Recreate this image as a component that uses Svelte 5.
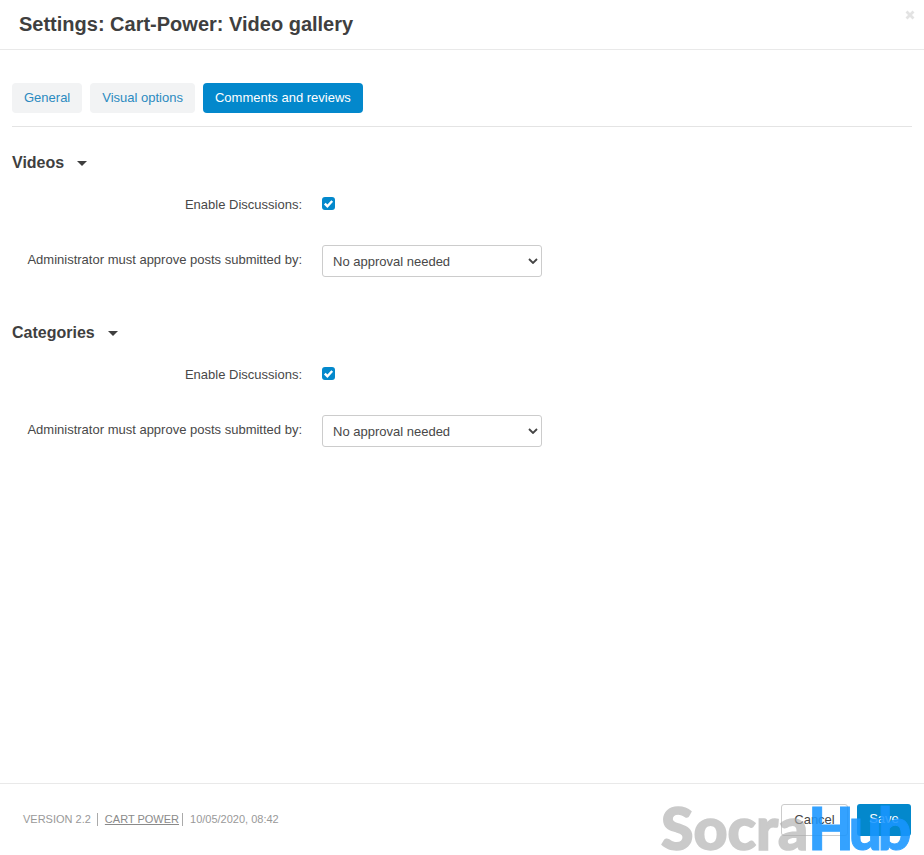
<script>
  const sections = ['Videos', 'Categories'];
</script>

<div class="dialog">
  <header class="head">
    <h1>Settings: Cart-Power: Video gallery</h1>
    <svg class="close" viewBox="0 0 10 10" width="10" height="10" aria-hidden="true"><path d="M1.5 1.5l7 7M8.500 1.500l-7 7" stroke="#e3e3e3" stroke-width="2.800" fill="none"/></svg>
  </header>

  <main class="body">
    <nav class="tabs">
      <span class="tab">General</span>
      <span class="tab">Visual options</span>
      <span class="tab active">Comments and reviews</span>
    </nav>

    {#each sections as s}
      <section class="section">
        <h2>{s}<span class="caret"></span></h2>
        <div class="row check">
          <span class="label">Enable Discussions:</span>
          <span class="box">
            <svg viewBox="0 0 13 13" width="13" height="13" aria-hidden="true"><rect width="13" height="13" rx="3" fill="#0388cc"/><path d="M2.800 6.600l2.600 2.600L10.200 4" stroke="#fff" stroke-width="2.400" fill="none"/></svg>
          </span>
        </div>
        <div class="row sel">
          <span class="label">Administrator must approve posts submitted by:</span>
          <span class="select">No approval needed
            <svg viewBox="0 0 10 6" width="10" height="6" aria-hidden="true"><path d="M1 1l4 4 4-4" stroke="#444" stroke-width="1.800" fill="none"/></svg>
          </span>
        </div>
      </section>
    {/each}
  </main>

  <footer class="foot">
    <div class="meta">
      <span class="v">VERSION 2.2</span>
      <span class="link">CART POWER</span>
      <span class="d">10/05/2020, 08:42</span>
    </div>
    <div class="btns">
      <span class="btn cancel">Cancel</span>
      <span class="btn save">Save</span>
    </div>
  </footer>

  <div class="mark"><span class="socra">Socra</span><span class="hub">Hub</span></div>
</div>

<style>
  :global(body) { margin: 0; background: #fff; }
  .dialog {
    position: relative;
    width: 924px;
    height: 855px;
    display: flex;
    flex-direction: column;
    overflow: hidden;
    font-family: "Liberation Sans", Arial, sans-serif;
    font-size: 13px;
    color: #484848;
  }
  .head {
    position: relative;
    height: 49px;
    flex: none;
    border-bottom: 1px solid #e9e9e9;
    padding-left: 19px;
    display: flex;
    align-items: center;
  }
  h1 { margin: 0; font-size: 20px; font-weight: 700; color: #3f3f3f; line-height: 49px; }
  .close { position: absolute; right: 9px; top: 10px; }
  .body { flex: 1; padding: 33px 12px 0; }
  .tabs {
    display: flex;
    gap: 8px;
    height: 30px;
    padding-bottom: 13px;
    border-bottom: 1px solid #e4e4e4;
  }
  .tab {
    height: 30px;
    line-height: 30px;
    padding: 0 12px;
    background: #f2f3f4;
    border-radius: 4px;
    color: #2b8ac0;
  }
  .tab.active { background: #0388cc; color: #fff; }
  .section { height: 170px; }
  h2 {
    margin: 0;
    padding-top: 27px;
    font-size: 16px;
    line-height: 18px;
    font-weight: 700;
    color: #3f3f3f;
    display: flex;
    align-items: center;
  }
  .caret {
    margin-left: 13px;
    border-left: 5px solid transparent;
    border-right: 5px solid transparent;
    border-top: 5px solid #3f3f3f;
  }
  .row { display: flex; }
  .label { width: 290px; text-align: right; line-height: 18px; flex: none; }
  .check { margin-top: 23px; height: 18px; align-items: center; }
  .check .label { margin-top: 2px; }
  .box { margin-left: 20px; display: flex; }
  .box svg { display: block; margin-top: -2px; }
  .sel { margin-top: 32px; align-items: flex-start; }
  .sel .label { margin-top: 6px; }
  .select {
    box-sizing: border-box;
    margin-left: 20px;
    width: 220px;
    height: 32px;
    border: 1px solid #ccc;
    border-radius: 3px;
    padding: 0 10px;
    line-height: 31px;
    display: flex;
    justify-content: space-between;
    align-items: center;
  }
  .select svg { margin-right: -7px; }
  .foot {
    flex: none;
    height: 71px;
    border-top: 1px solid #e9e9e9;
    padding: 0 13px 0 23px;
    display: flex;
    justify-content: space-between;
    align-items: center;
    box-sizing: content-box;
  }
  .meta { font-size: 11px; color: #999; display: flex; align-items: center; line-height: 13px; }
  .v { padding-right: 6px; border-right: 1px solid #aaa; }
  .link { text-decoration: underline; margin-left: 7px; padding-right: 3px; border-right: 1px solid #aaa; color: #8a8a8a; }
  .d { margin-left: 7px; }
  .btns { display: flex; gap: 9px; }
  .btn {
    box-sizing: border-box;
    height: 32px;
    line-height: 30px;
    border-radius: 3px;
    text-align: center;
  }
  .cancel { width: 67px; border: 1px solid #ccc; color: #444; }
  .save { width: 54px; background: #0388cc; color: #fff; }
  .mark {
    position: absolute;
    left: 661px;
    top: 793px;
    font-family: "Lato", sans-serif;
    font-size: 59px;
    line-height: 70px;
    font-weight: 900;
    white-space: nowrap;
    pointer-events: none;
  }
  .socra { color: #aaa; -webkit-text-stroke: 1.500px #aaa; opacity: 0.62; }
  .hub { color: #1996ff; letter-spacing: -4.500px; -webkit-text-stroke: 1px #1996ff; opacity: 0.88; }
</style>
